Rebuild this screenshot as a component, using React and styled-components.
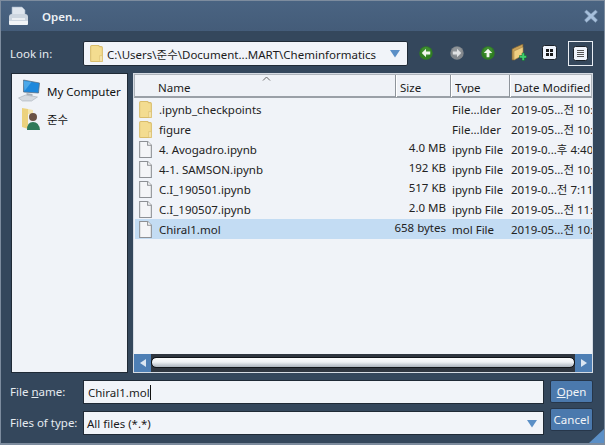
import React from 'react';
import styled, { createGlobalStyle } from 'styled-components';

const Global = createGlobalStyle`
  html, body { margin: 0; padding: 0; background: #34475c; }
  * { box-sizing: border-box; }
`;
const FONT = `"Noto Sans", "Noto Sans CJK KR", sans-serif`;

const Win = styled.div`
  position: relative; width: 605px; height: 445px; overflow: hidden;
  display: flex; flex-direction: column;
  background: #34475c; font-family: ${FONT}; font-size: 11.5px; color: #111;
  border: 1px solid #7d8c9e; border-width: 1px 1px 2px 1px;
`;
const TitleBar = styled.div`
  height: 30px; flex: none; display: flex; align-items: center; padding: 0 6px 0 7px;
  background: linear-gradient(#4a6482, #445c79);
`;
const TitleText = styled.span`
  margin-left: 13px; color: #edf1f5; font-weight: 600; font-size: 11.5px; flex: 1;
`;
const Body = styled.div`
  flex: 1; display: flex; flex-direction: column; padding: 10px 11px 0 9px; min-height: 0;
`;
const LookRow = styled.div`
  display: flex; align-items: center; height: 25px; flex: none;
`;
const Label = styled.label`
  width: 73px; flex: none; color: #e6ebf0; font-size: 11.5px; white-space: nowrap;
`;
const Combo = styled.div`
  width: 325px; height: 25px; flex: none; display: flex; align-items: center; padding: 0 6px 0 6px;
  background: #f1f4f9; border: 1px solid #1f2a36; border-radius: 2px; white-space: nowrap;
`;
const Path = styled.span`flex: 1; margin-left: 4px; font-size: 11.5px; color: #1b1b1b; overflow: hidden;`;
const Tools = styled.div`
  display: flex; align-items: center; flex: 1; padding-left: 2px;
`;
const Tool = styled.div`
  width: ${p => p.$w || 31}px; height: 25px; flex: none; display: flex; align-items: center; justify-content: center;
  margin-left: ${p => p.$ml || 0}px; padding-bottom: ${p => p.$active ? 0 : 2}px;
  border: ${p => p.$active ? '1px solid #e8edf3' : '1px solid transparent'};
`;
const Panels = styled.div`
  display: flex; gap: 5px; height: 300px; flex: none; margin: 7px 0 0 1px;
`;
const Side = styled.div`
  width: 117px; flex: none; background: #f0f3f8; border: 1px solid #1f2a36; padding: 3px 0 0 5px;
  display: flex; flex-direction: column;
`;
const SideItem = styled.div`
  height: 28px; display: flex; align-items: center; gap: 5px; font-size: 11.5px; color: #111;
`;
const List = styled.div`
  flex: 1; min-width: 0; background: #f0f3f8; border: 1px solid #d5dbe3; display: flex; flex-direction: column;
`;
const cols = '261px 55px 59px 1fr';
const Header = styled.div`
  display: grid; grid-template-columns: ${cols}; height: 24px; flex: none; position: relative;
  background: #eff2f7; border: 1px solid #aeb4bb; border-bottom: 2px solid #9aa0a7; margin-bottom: 1px;
`;
const HCell = styled.div`
  border-right: ${p => p.$last ? 'none' : '1px solid #8e949b'}; border-left: ${p => p.$first ? 'none' : '1px solid #fff'};
  padding: 5px 0 0 ${p => p.$pad || 3}px; height: 22px; overflow: hidden; white-space: nowrap;
`;
const HLabel = styled.div`height: 13px; overflow: hidden; font-size: 11.5px; line-height: 15px; color: #1c1c1c;`;
const Caret = styled.svg`position: absolute; left: 127px; top: 1px;`;
const Rows = styled.div`flex: 1; min-height: 0; display: flex; flex-direction: column;`;
const Row = styled.div`
  display: grid; grid-template-columns: ${cols}; height: 20px; flex: none; align-items: center; margin-left: 1px;
  background: ${p => p.$sel ? '#c3dcf3' : 'transparent'};
`;
const NameCell = styled.div`display: flex; align-items: center; gap: 7px; padding-left: 4px; white-space: nowrap; overflow: hidden; color: #222;`;
const SizeCell = styled.div`
  display: flex; justify-content: flex-end; padding-right: 5px; margin-top: -3px; white-space: nowrap; color: #222;
`;
const Cell = styled.div`white-space: nowrap; overflow: hidden; padding-left: 1px; color: #222;`;
const Scroll = styled.div`
  height: 18px; flex: none; display: flex; background: #2f3640;
`;
const ScrollBtn = styled.div`
  width: 17px; flex: none; background: #4e7fb5; display: flex; align-items: center; justify-content: center;
`;
const Track = styled.div`flex: 1; padding: 3px 1px; display: flex;`;
const Thumb = styled.div`
  flex: 1; height: 9px; margin-top: 1px; border-radius: 4px; background: linear-gradient(#fafbfc, #eef1f4 45%, #a9b2bc);
  outline: 1px solid #11151a;
`;
const FormRow = styled.div`
  display: flex; align-items: flex-start; flex: none; margin-top: ${p => p.$mt}px; height: 24px;
`;
const FormLabel = styled(Label)`line-height: 24px;`;
const Field = styled.div`
  width: 461px; height: 24px; flex: none; background: #f1f4f9; border: 1px solid #1f2a36; display: flex; align-items: center;
  padding-left: ${p => p.$pad}px; font-size: 11.5px; color: #1b1b1b; position: relative;
`;
const CaretBar = styled.span`display: inline-block; width: 1px; height: 15px; background: #111;`;
const Btn = styled.button`
  width: 43px; height: 23px; margin: ${p => p.$up ? -3 : 0}px 0 0 6px; padding: 0; flex: none;
  background: #4b79ad; border: 1px solid #26364a; border-radius: 2px; color: #f2f5f8;
  font: 11.5px ${FONT};
`;
const Grip = styled.svg`position: absolute; right: 0; bottom: 0;`;
const U = styled.span`text-decoration: underline;`;
const DownWrap = styled.span`position: absolute; right: 5px; top: 7px; display: flex;`;

const Folder = () => (
  <svg width="13" height="17" viewBox="0 0 12 16">
    <path d="M.5 1.500Q.5.5 1.500.5H8l1 1h1.500q1 0 1 1V15q0 .5-.5.5H1q-.5 0-.5-.5Z" fill="#f3dc90" stroke="#d9bd6c" />
    <path d="M9 10h2.500v5.500H9Z" fill="#f7e8b4" stroke="#d9bd6c" strokeWidth=".6" />
  </svg>
);
const Doc = () => (
  <svg width="13" height="17" viewBox="0 0 12 16">
    <path d="M.5.5H8L11.500 4V15.500H.5Z" fill="#f4f5f7" stroke="#8d9094" />
    <path d="M8 .5V4H11.500" fill="#fff" stroke="#8d9094" />
  </svg>
);
const Arrow = ({ dir, grey }) => {
  const rot = dir === 'left' ? 0 : dir === 'right' ? 180 : 90;
  return (
    <svg width="14" height="14" viewBox="0 0 15 15">
      <circle cx="7.500" cy="7.500" r="7.200" fill={grey ? '#82878c' : '#2f7d22'} />
      <circle cx="7.500" cy="6" r="5" fill={grey ? '#9a9ea2' : '#4a9a3a'} opacity=".6" />
      <path transform={`rotate(${rot} 7.500 7.500)`} d="M3 7.500 7.500 3v3H12v3H7.500v3Z" fill={grey ? '#dfe1e3' : '#f0f6ee'} />
    </svg>
  );
};
const NewFolder = () => (
  <svg width="16" height="17" viewBox="0 0 16 17">
    <path d="M1 5 5 3l7-3v11l-9 5H1Z" fill="#caa258" stroke="#6e5a33" strokeWidth=".7" />
    <path d="M3 7l9-4v8l-9 5Z" fill="#f0cf82" stroke="#9c7f45" strokeWidth=".5" />
    <path d="M10 11h2.500V8.500h2.500V11H17v2.500h-2v2.500h-2.500v-2.500H10Z" transform="translate(-1.500 .5)" fill="#3fcf6e" stroke="#145c2c" strokeWidth=".5" />
  </svg>
);
const ViewList = () => (
  <svg width="15" height="15" viewBox="0 0 15 15">
    <rect x=".5" y=".5" width="14" height="14" rx="2" fill="#eef3fb" stroke="#1a2129" />
    <path d="M4 4.500h7M4 6.500h7M4 8.500h7M4 10.500h7" stroke="#555" strokeWidth="1" />
  </svg>
);
const ViewIcons = () => (
  <svg width="15" height="15" viewBox="0 0 15 15">
    <rect x=".5" y=".5" width="14" height="14" rx="2" fill="#eef3fb" stroke="#1a2129" />
    <path d="M4 4h3v3H4ZM8 4h3v3H8ZM4 8h3v3H4ZM8 8h3v3H8Z" fill="#1a1a1a" />
  </svg>
);
const Down = () => (
  <svg width="12" height="9" viewBox="0 0 12 9"><path d="M1 1h10L6 8.500Z" fill="#5b8fc6" /></svg>
);
const Printer = () => (
  <svg width="21" height="20" viewBox="0 0 21 20">
    <path d="M4 1h10l3 3v6H4Z" fill="#dfe6ee" stroke="#9fb0c2" strokeWidth=".6" />
    <path d="M1 11q0-3 3-3h13q3 0 3 3v4H1Z" fill="#cdd6e0" />
    <path d="M1 15h19v3q0 1-1 1H2q-1 0-1-1Z" fill="#f1f4f7" />
    <path d="M4 13h13" stroke="#f5f7fa" strokeWidth="1.500" />
  </svg>
);
const Close = () => (
  <svg width="14" height="14" viewBox="0 0 14 14">
    <path d="M2.500 1 7 5 11.500 1 13.500 3 9.500 7 13.500 11 11.500 13.500 7 9.500 2.500 13.500.5 11 4.500 7 .5 3Z" fill="#a7c0dc" stroke="#7b93ae" strokeWidth=".5" />
  </svg>
);
const Computer = () => (
  <svg width="25" height="24" viewBox="0 0 24 24">
    <path d="M6 1l16 3-1 10-15-1Z" fill="#1e88dc" stroke="#5a6a7a" strokeWidth=".7" />
    <path d="M6 2l8 1-7 9Z" fill="#5fb6ee" opacity=".7" />
    <path d="M9 14l6 1v2l-6-1Z" fill="#aab2ba" />
    <path d="M1 19l7-3 12 2-6 4H5Z" fill="#d5dae0" stroke="#9aa3ac" strokeWidth=".5" />
  </svg>
);
const User = () => (
  <svg width="25" height="24" viewBox="-5 0 25 24">
    <path d="M0 1l6 1v20l-6-2Z" fill="#ecd27e" />
    <path d="M6 2l5 1v4H6Z" fill="#f6e6ae" />
    <circle cx="11" cy="10" r="4" fill="#6b5244" />
    <path d="M5 23q0-8 6-8t7 8Z" fill="#2f7a5a" />
  </svg>
);

const files = [
  { n: '.ipynb_checkpoints', s: '', t: 'File...lder', d: '2019-05...전 10:33', f: true },
  { n: 'figure', s: '', t: 'File...lder', d: '2019-05...전 10:33', f: true },
  { n: '4. Avogadro.ipynb', s: '4.0 MB', t: 'ipynb File', d: '2019-0...후 4:40' },
  { n: '4-1. SAMSON.ipynb', s: '192 KB', t: 'ipynb File', d: '2019-05...전 10:55' },
  { n: 'C.I_190501.ipynb', s: '517 KB', t: 'ipynb File', d: '2019-0...전 7:11' },
  { n: 'C.I_190507.ipynb', s: '2.0 MB', t: 'ipynb File', d: '2019-05...전 11:45' },
  { n: 'Chiral1.mol', s: '658 bytes', t: 'mol File', d: '2019-05...전 10:55', sel: true },
];

export default function App() {
  return (
    <>
      <Global />
      <Win>
        <TitleBar>
          <Printer />
          <TitleText>Open...</TitleText>
          <Close />
        </TitleBar>
        <Body>
          <LookRow>
            <Label>Look in:</Label>
            <Combo>
              <Folder />
              <Path>C:\Users\준수\Document...MART\Cheminformatics</Path>
              <Down />
            </Combo>
            <Tools>
              <Tool><Arrow dir="left" /></Tool>
              <Tool><Arrow dir="right" grey /></Tool>
              <Tool><Arrow dir="up" /></Tool>
              <Tool><NewFolder /></Tool>
              <Tool><ViewIcons /></Tool>
              <Tool $active $w={25} $ml={3}><ViewList /></Tool>
            </Tools>
          </LookRow>
          <Panels>
            <Side>
              <SideItem><Computer /><span>My Computer</span></SideItem>
              <SideItem><User /><span>준수</span></SideItem>
            </Side>
            <List>
              <Header>
                <Caret width="9" height="5" viewBox="0 0 9 5"><path d="M1 4.500 4.500 1 8 4.500" fill="none" stroke="#666" /></Caret>
                <HCell $first $pad={23}><HLabel>Name</HLabel></HCell>
                <HCell><HLabel>Size</HLabel></HCell>
                <HCell><HLabel>Type</HLabel></HCell>
                <HCell $last><HLabel>Date Modified</HLabel></HCell>
              </Header>
              <Rows>
                {files.map(f => (
                  <Row key={f.n} $sel={f.sel}>
                    <NameCell>{f.f ? <Folder /> : <Doc />}<span>{f.n}</span></NameCell>
                    <SizeCell>{f.s}</SizeCell>
                    <Cell>{f.t}</Cell>
                    <Cell>{f.d}</Cell>
                  </Row>
                ))}
              </Rows>
              <Scroll>
                <ScrollBtn><svg width="6" height="8" viewBox="0 0 6 8"><path d="M6 0v8L0 4Z" fill="#dbe6f2" /></svg></ScrollBtn>
                <Track><Thumb /></Track>
                <ScrollBtn><svg width="6" height="8" viewBox="0 0 6 8"><path d="M0 0v8l6-4Z" fill="#dbe6f2" /></svg></ScrollBtn>
              </Scroll>
            </List>
          </Panels>
          <FormRow $mt={7}>
            <FormLabel>File <U>n</U>ame:</FormLabel>
            <Field $pad={4}>Chiral1.mol<CaretBar /></Field>
            <Btn><U>O</U>pen</Btn>
          </FormRow>
          <FormRow $mt={7}>
            <FormLabel>Files of type:</FormLabel>
            <Field $pad={3}>All files (*.*)<DownWrap><Down /></DownWrap></Field>
            <Btn $up>Cancel</Btn>
          </FormRow>
        </Body>
        <Grip width="15" height="14" viewBox="0 0 15 14"><path d="M15 0v14H0Z" fill="#5b8fc6" /></Grip>
      </Win>
    </>
  );
}
